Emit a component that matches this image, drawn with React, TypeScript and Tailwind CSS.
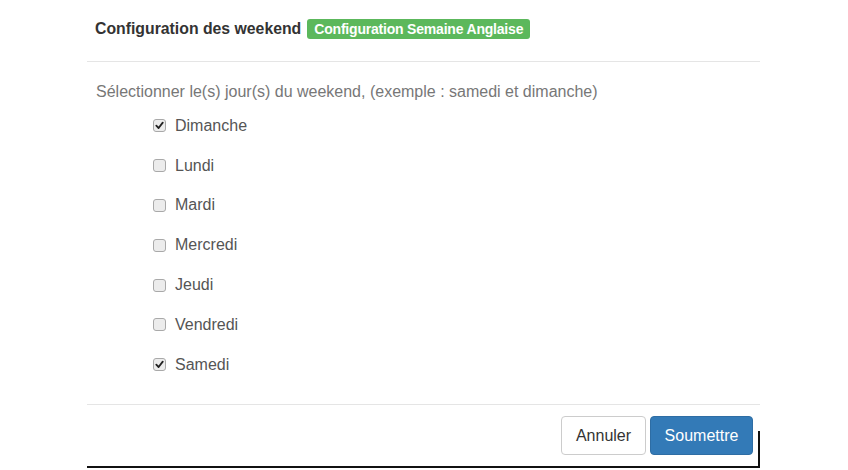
import React from "react";

const days = [
  { name: "Dimanche", checked: true },
  { name: "Lundi", checked: false },
  { name: "Mardi", checked: false },
  { name: "Mercredi", checked: false },
  { name: "Jeudi", checked: false },
  { name: "Vendredi", checked: false },
  { name: "Samedi", checked: true },
];

function Box({ checked }: { checked: boolean }) {
  return (
    <span className="w-[13px] h-[13px] rounded-[3px] border border-[#a9a9a9] bg-[#ececec] flex items-center justify-center">
      {checked && (
        <svg width="9" height="9" viewBox="0 0 10 10">
          <path d="M1.5 5.2 L4 7.8 L8.6 1.8" fill="none" stroke="#222" strokeWidth="2" strokeLinecap="round" strokeLinejoin="round" />
        </svg>
      )}
    </span>
  );
}

export default function App() {
  return (
    <div className="w-[848px] h-[470px] bg-white overflow-hidden" style={{ fontFamily: '"Liberation Sans", Arial, sans-serif' }}>
      <div className="ml-[87px] w-[673px] relative">
        <div className="h-[62px] border-b border-[#e5e5e5] flex items-center pl-[8px] pb-[3px]">
          <span className="text-[15.8px] font-bold text-[#333]">Configuration des weekend</span>
          <span className="ml-[6px] bg-[#5cb85c] text-white text-[14px] font-bold rounded-[3px] px-[7px] h-[20px] flex items-center tracking-[-0.2px]">
            Configuration Semaine Anglaise
          </span>
        </div>
        <div className="h-[343px] border-b border-[#e5e5e5] pt-[19px]">
          <div className="pl-[9px] text-[16px] text-[#777] leading-[22px]">
            Sélectionner le(s) jour(s) du weekend, (exemple : samedi et dimanche)
          </div>
          <div className="pl-[66px] pt-[3px] flex flex-col">
            {days.map((d) => (
              <div key={d.name} className="h-[39.8px] flex items-center gap-[9px]">
                <Box checked={d.checked} />
                <span className="text-[16px] text-[#555]">{d.name}</span>
              </div>
            ))}
          </div>
        </div>
        <div className="h-[63px] border-b-2 border-[#111] flex justify-end items-start pt-[11px] pr-[7px] gap-[4px]">
          <div className="w-[85px] h-[39px] border border-[#ccc] rounded-[4px] flex items-center justify-center text-[16px] text-[#333] bg-white">
            Annuler
          </div>
          <div className="w-[103px] h-[39px] border border-[#2e6da4] rounded-[4px] flex items-center justify-center text-[16px] text-white bg-[#337ab7]">
            Soumettre
          </div>
          <div className="absolute right-0 bottom-0 w-[2px] h-[37px] bg-[#111]" />
        </div>
      </div>
    </div>
  );
}
